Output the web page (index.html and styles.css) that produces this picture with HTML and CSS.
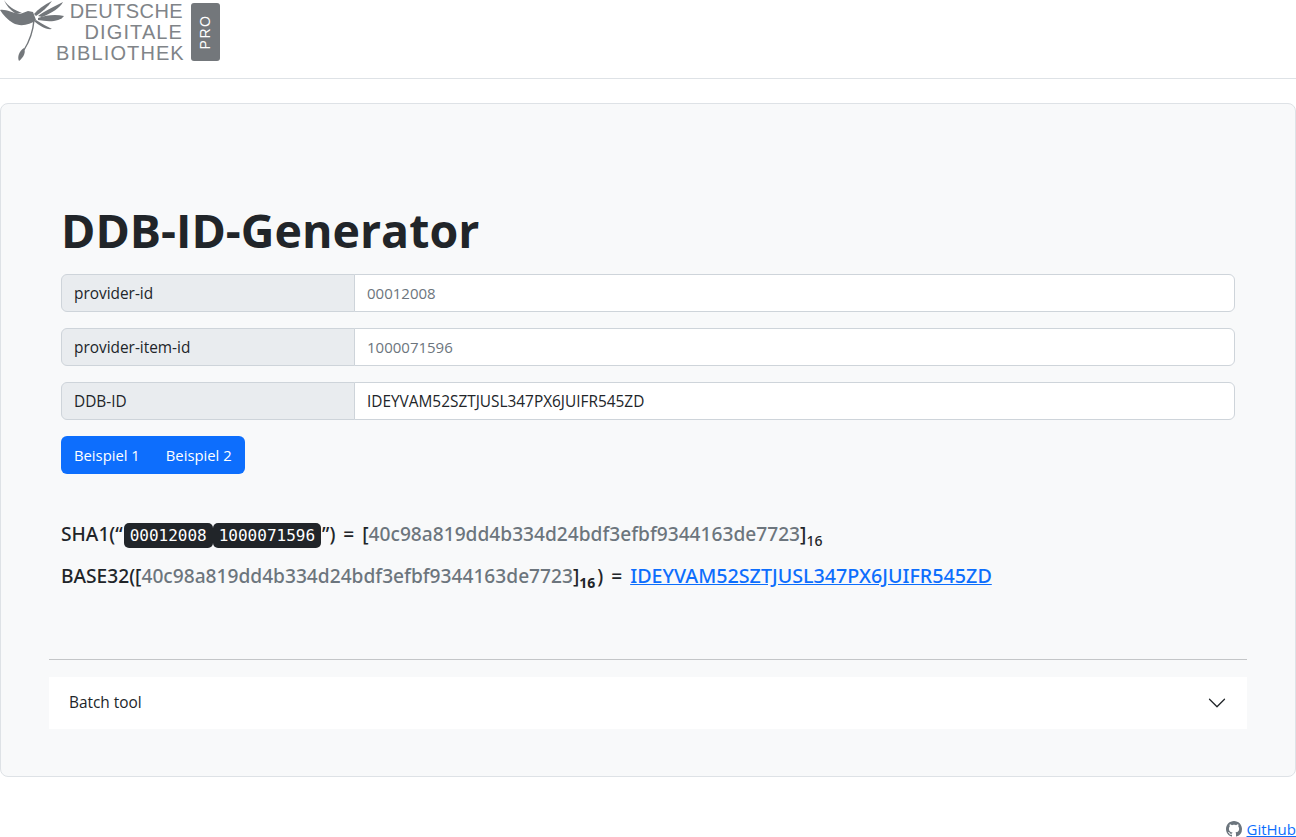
FILE: index.html
```html
<!DOCTYPE html>
<html lang="de">
<head>
    <meta charset="UTF-8">
    <meta name="viewport" content="width=device-width, initial-scale=1.0">
    <title>DDB-ID-Generator</title>
    <link rel="stylesheet" href="styles.css">
</head>
<body>

    <header class="navbar">
        <a class="logo" href="#">
            <svg class="logo-flower" width="65" height="62" viewBox="0 0 65 62" fill="#73777b">
                <path d="M0 10 C6 9 12 13 20 14 L28 11 L33 12 L36 20 C30 25 20 27 13 23 C8 20 3 15 0 10 Z"/>
                <path d="M4 0 C8 6 14 10 22 13 L16 14 C10 10 6 5 4 0 Z"/>
                <path d="M34 14 C38 9 44 5 52 1 C48 7 42 12 36 16 Z"/>
                <path d="M38 16 C44 11 54 7 63 2 C60 8 52 13 42 17 Z"/>
                <path d="M38 18 C46 15 56 14 64 16 C60 22 48 22 38 20 Z"/>
                <path d="M36 20 C42 24 48 27 52 29 C46 30 40 26 34 21 Z"/>
                <path d="M34 20 C33 32 29 42 24 50" fill="none" stroke="#73777b" stroke-width="1.4"/>
                <path d="M24 48 C26 52 24 57 19 61 C17 57 19 51 24 48 Z"/>
            </svg>
            <span class="logo-text"><span class="logo-line-tight">DEUTSCHE</span><br>DIGITALE<br>BIBLIOTHEK</span>
            <span class="logo-pro"><span>PRO</span></span>
        </a>
    </header>

    <main class="jumbotron">
        <h1>DDB-ID-Generator</h1>

        <div class="input-group">
            <span class="input-label">provider-id</span>
            <input type="text" class="input-field" placeholder="00012008">
        </div>
        <div class="input-group">
            <span class="input-label">provider-item-id</span>
            <input type="text" class="input-field" placeholder="1000071596">
        </div>
        <div class="input-group">
            <span class="input-label">DDB-ID</span>
            <input type="text" class="input-field" value="IDEYVAM52SZTJUSL347PX6JUIFR545ZD">
        </div>

        <div class="btn-group">
            <button class="btn">Beispiel 1</button>
            <button class="btn">Beispiel 2</button>
        </div>

        <div class="formula">
            <p>SHA1(“<code>00012008</code><code>1000071596</code>”) = [<span class="hash">40c98a819dd4b334d24bdf3efbf9344163de7723</span>]<sub>16</sub></p>
            <p>BASE32([<span class="hash">40c98a819dd4b334d24bdf3efbf9344163de7723</span>]<sub class="sub-bold">16</sub>) = <a href="#">IDEYVAM52SZTJUSL347PX6JUIFR545ZD</a></p>
        </div>

        <hr class="divider">

        <div class="accordion">
            <span>Batch tool</span>
            <svg width="20" height="20" viewBox="0 0 16 16"><path fill="#212529" fill-rule="evenodd" d="M1.646 4.646a.5.5 0 0 1 .708 0L8 10.293l5.646-5.647a.5.5 0 0 1 .708.708l-6 6a.5.5 0 0 1-.708 0l-6-6a.5.5 0 0 1 0-.708z"/></svg>
        </div>
    </main>

    <footer class="footer">
        <svg width="16" height="16" viewBox="0 0 16 16"><path fill="#6c757d" d="M8 0C3.58 0 0 3.58 0 8c0 3.54 2.29 6.53 5.47 7.59.4.07.55-.17.55-.38 0-.19-.01-.82-.01-1.49-2.01.37-2.53-.49-2.69-.94-.09-.23-.48-.94-.82-1.13-.28-.15-.68-.52-.01-.53.63-.01 1.08.58 1.23.82.72 1.21 1.87.87 2.33.66.07-.52.28-.87.51-1.07-1.78-.2-3.64-.89-3.64-3.95 0-.87.31-1.59.82-2.15-.08-.2-.36-1.02.08-2.12 0 0 .67-.21 2.2.82.64-.18 1.32-.27 2-.27s1.36.09 2 .27c1.53-1.04 2.2-.82 2.2-.82.44 1.1.16 1.92.08 2.12.51.56.82 1.27.82 2.15 0 3.07-1.87 3.75-3.65 3.95.29.25.54.73.54 1.48 0 1.07-.01 1.93-.01 2.2 0 .21.15.46.55.38A8.01 8.01 0 0 0 16 8c0-4.42-3.58-8-8-8z"/></svg>
        <a href="#">GitHub</a>
    </footer>

</body>
</html>
```

FILE: styles.css
```css
* {
    box-sizing: border-box;
}

body {
    margin: 0;
    font-family: "Open Sans", "Noto Sans", sans-serif;
    font-size: 15.4px;
    line-height: 24px;
    color: #212529;
    background-color: #fff;
}

a {
    color: #0d6efd;
}

/* Kopfzeile */
.navbar {
    height: 79px;
    border-bottom: 1px solid #dee2e6;
}

.logo {
    display: flex;
    align-items: flex-start;
    text-decoration: none;
    height: 62px;
}

.logo-flower {
    flex: none;
}

.logo-text {
    margin: 1px 0 0 -9px;
    width: 127px;
    font-family: "Liberation Sans", sans-serif;
    font-size: 20px;
    line-height: 21px;
    letter-spacing: 1.1px;
    text-align: right;
    color: #808488;
}

.logo-line-tight {
    letter-spacing: 0.4px;
}

.logo-pro {
    display: flex;
    align-items: center;
    justify-content: center;
    width: 29px;
    height: 58px;
    margin: 3px 0 0 8px;
    border-radius: 3px;
    background-color: #73777b;
}

.logo-pro span {
    transform: rotate(-90deg);
    font-family: "Liberation Sans", sans-serif;
    font-size: 14px;
    letter-spacing: 1.5px;
    color: #fff;
}

/* Hauptbereich */
.jumbotron {
    margin-top: 24px;
    height: 674px;
    padding: 98px 48px 0;
    background-color: #f8f9fa;
    border: 1px solid #dee2e6;
    border-radius: 8px;
}

h1 {
    margin: 0 12px 16px;
    font-size: 46.5px;
    line-height: 56px;
    font-weight: 700;
}

.input-group {
    display: flex;
    height: 38px;
    margin: 0 12px 16px;
}

.input-label {
    flex: none;
    width: 294px;
    padding: 7px 12px 5px;
    background-color: #e9ecef;
    border: 1px solid #ced4da;
    border-radius: 6px 0 0 6px;
}

.input-field {
    flex: 1;
    margin-left: -1px;
    padding: 8px 12px 6px;
    font: inherit;
    color: #212529;
    background-color: #fff;
    border: 1px solid #ced4da;
    border-radius: 0 6px 6px 0;
}

.input-field::placeholder {
    font-size: 15px;
    color: #6c757d;
}

.btn-group {
    display: flex;
    margin: 0 12px;
    width: max-content;
    border-radius: 6px;
    overflow: hidden;
}

.btn {
    height: 38px;
    padding: 6px 13px;
    font: inherit;
    font-size: 14.8px;
    color: #fff;
    background-color: #0d6efd;
    border: 0;
}

.formula {
    margin: 47px 12px 0;
    font-family: "Noto Sans", "Open Sans", sans-serif;
    font-size: 19.15px;
    font-weight: 500;
    word-spacing: 3px;
}

.formula p {
    margin: 0 0 13px;
    line-height: 27px;
}

.formula a {
    font-size: 19.7px;
}

.formula code {
    padding: 3px 6px;
    font-family: "DejaVu Sans Mono", monospace;
    font-size: 16px;
    font-weight: normal;
    color: #fff;
    background-color: #212529;
    border-radius: 5px;
}

.formula code:first-of-type {
    margin-left: 1px;
}

.formula code:last-of-type {
    margin-right: 1px;
}

.hash {
    color: #6c757d;
}

.formula sub {
    font-size: 14px;
    line-height: 0;
}

.formula .sub-bold {
    margin-right: 2px;
    font-weight: 700;
}

.divider {
    margin: 69px 0 17px;
    border: 0;
    border-top: 1px solid #c4c6c8;
}

.accordion {
    display: flex;
    align-items: center;
    justify-content: space-between;
    height: 52px;
    padding: 0 20px;
    background-color: #fff;
}

.footer {
    display: flex;
    align-items: center;
    justify-content: flex-end;
    gap: 5px;
    margin-top: 40px;
    height: 24px;
}

.footer a {
    font-size: 15px;
}
```
